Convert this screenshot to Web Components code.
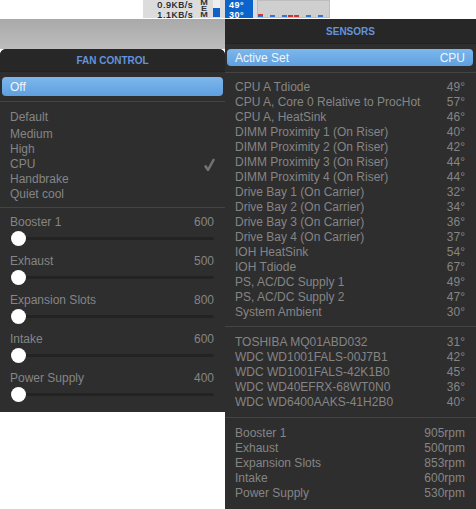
<!DOCTYPE html>
<html>
<head>
<meta charset="utf-8">
<title>Fan Control</title>
<style>
  html, body { margin: 0; padding: 0; background: #fff; }
  body { width: 476px; height: 509px; overflow: hidden; font-family: "Liberation Sans", Arial, sans-serif; font-size: 12px; }
</style>
</head>
<body>
<desktop-view>
  <menu-extras slot="bar"></menu-extras>
  <fan-panel slot="left"></fan-panel>
  <sensor-panel slot="right"></sensor-panel>
</desktop-view>

<script>
// shared bits for the two dark panels
const panelCss = `
  .title {
    display: flex;
    align-items: center;
    justify-content: center;
    font-size: 10px;
    font-weight: bold;
    color: #6493dc;
    background: #272727;
    border-bottom: 1px solid #222;
  }
  .sep { height: 1px; background: #444; }
`;

class DesktopView extends HTMLElement {
  constructor() {
    super();
    this.attachShadow({ mode: 'open' });
    this.shadowRoot.innerHTML = `
      <style>
        :host { display: block; width: 476px; height: 509px; }
        .bar { height: 19px; display: flex; }
        .cols { display: flex; height: 490px; }
        .left { width: 225px; }
        .gap {
          height: 30px;
          background: linear-gradient(#a9a9a9, #bdbdbd);
        }
      </style>
      <div class="bar"><slot name="bar"></slot></div>
      <div class="cols">
        <div class="left">
          <div class="gap"></div>
          <slot name="left"></slot>
        </div>
        <slot name="right"></slot>
      </div>
    `;
  }
}

class MenuExtras extends HTMLElement {
  constructor() {
    super();
    this.attachShadow({ mode: 'open' });
    // little history bars in the last item
    const ticks = [[13, '#37c'], [25, '#37c'], [31, '#c33'], [37, '#c33'], [49, '#37c'], [61, '#37c']]
      .map(([x, c]) => `<rect x="${x}" y="15" width="5" height="2" fill="${c}"/>`).join('');
    this.shadowRoot.innerHTML = `
      <style>
        :host {
          display: flex;
          margin-left: 143px;
          width: 187px;
          height: 18px;
          background: #dcdcdc;
          color: #111;
          font-size: 9px;
        }
        .net { width: 38px; margin-left: 12px; line-height: 10px; text-align: right; white-space: nowrap; letter-spacing: 0.6px; -webkit-text-stroke: 0.2px #111; }
        .mem {
          width: 8px; margin-left: 7px; font-size: 7px; line-height: 6px;
          text-align: center; color: #333; font-weight: bold; transform: scaleX(1.3);
        }
        .meter { width: 7px; height: 17px; margin-left: 5px; background: linear-gradient(#eee 50%, #0f62c6 50%); }
        .temp {
          width: 28px; margin-left: 5px; height: 18px; background: #0a64cc; color: #fff;
          font-size: 9px; font-weight: bold; line-height: 10px; padding-left: 4px; box-sizing: border-box; letter-spacing: 0.5px;
        }
        svg { margin-left: 4px; display: block; }
      </style>
      <div class="net">0.9KB/s<br>1.1KB/s</div>
      <div class="mem">M<br>E<br>M</div>
      <div class="meter"></div>
      <div class="temp">49°<br>30°</div>
      <svg width="73" height="18" viewBox="0 0 73 18">
        <rect x="0.5" y="0.5" width="72" height="17" fill="#cfcfcf" stroke="#bdbdbd"/>
        <rect x="1" y="15" width="5" height="2" fill="#37c"/>
        <rect x="1" y="14" width="5" height="2" fill="#c33"/>
        ${ticks}
      </svg>
    `;
  }
}

// blue highlighted row, used at the top of both panels
class BlueRow extends HTMLElement {
  constructor() {
    super();
    this.attachShadow({ mode: 'open' });
    this.shadowRoot.innerHTML = `
      <style>
        :host {
          display: flex;
          justify-content: space-between;
          align-items: center;
          border-radius: 4px;
          padding: 0 8px;
          color: #f0f5fb;
          background: linear-gradient(#7db8ec, #5f9fe0);
        }
      </style>
      <slot></slot>
    `;
  }
}

class ValueRow extends HTMLElement {
  constructor() {
    super();
    this.attachShadow({ mode: 'open' });
    this.shadowRoot.innerHTML = `
      <style>
        :host { display: flex; justify-content: space-between; height: 15px; line-height: 15px; }
      </style>
      <span>${this.getAttribute('name')}</span><span>${this.getAttribute('value')}</span>
    `;
  }
}

class FanSlider extends HTMLElement {
  constructor() {
    super();
    this.attachShadow({ mode: 'open' });
    this.shadowRoot.innerHTML = `
      <style>
        :host { display: block; height: 39px; }
        .top { display: flex; justify-content: space-between; height: 15px; line-height: 15px; }
        .track { position: relative; height: 3px; margin-top: 7px; border-radius: 2px; background: #232323; }
        .knob {
          position: absolute; left: 1px; top: -6px; width: 15px; height: 15px;
          border-radius: 50%; background: #fff;
        }
      </style>
      <div class="top"><span>${this.getAttribute('name')}</span><span>${this.getAttribute('value')}</span></div>
      <div class="track"><div class="knob"></div></div>
    `;
  }
}

class FanPanel extends HTMLElement {
  constructor() {
    super();
    this.attachShadow({ mode: 'open' });
    const modes = ['Medium', 'High', 'CPU', 'Handbrake', 'Quiet cool'].map(m => `
      <div class="mode">${m}${m === 'CPU' ? `<svg width="11" height="13" viewBox="0 0 11 13"><path d="M1 7.5 L4 12 L10 1" fill="none" stroke="#737373" stroke-width="2.4"/></svg>` : ''}</div>
    `).join('');
    const fans = [['Booster 1', 600], ['Exhaust', 500], ['Expansion Slots', 800], ['Intake', 600], ['Power Supply', 400]]
      .map(([n, v]) => `<fan-slider name="${n}" value="${v}"></fan-slider>`).join('');
    this.shadowRoot.innerHTML = `
      <style>
        :host {
          display: block;
          height: 363px;
          color: #858585;
          background: #2e2e2e;
          border-radius: 6px 6px 0 0;
          overflow: hidden;
        }
        ${panelCss}
        .title { height: 22px; }
        blue-row { height: 19px; margin: 5px 2px 5px; }
        .modes { padding: 7px 10px 5px; }
        .mode { height: 15px; line-height: 15px; display: flex; justify-content: space-between; align-items: center; }
        .mode.first { height: 17px; line-height: 17px; margin-bottom: 1px; }
        .fans { padding: 7px 11px 0 10px; }
      </style>
      <div class="title">FAN CONTROL</div>
      <blue-row>Off</blue-row>
      <div class="sep"></div>
      <div class="modes">
        <div class="mode first">Default</div>
        ${modes}
      </div>
      <div class="sep"></div>
      <div class="fans">${fans}</div>
    `;
  }
}

class SensorPanel extends HTMLElement {
  constructor() {
    super();
    this.attachShadow({ mode: 'open' });
    const rows = list => list.map(([n, v]) => `<value-row name="${n}" value="${v}"></value-row>`).join('');
    const temps = [
      ['CPU A Tdiode', '49°'], ['CPU A, Core 0 Relative to ProcHot', '57°'], ['CPU A, HeatSink', '46°'],
      ['DIMM Proximity 1 (On Riser)', '40°'], ['DIMM Proximity 2 (On Riser)', '42°'],
      ['DIMM Proximity 3 (On Riser)', '44°'], ['DIMM Proximity 4 (On Riser)', '44°'],
      ['Drive Bay 1 (On Carrier)', '32°'], ['Drive Bay 2 (On Carrier)', '34°'],
      ['Drive Bay 3 (On Carrier)', '36°'], ['Drive Bay 4 (On Carrier)', '37°'],
      ['IOH HeatSink', '54°'], ['IOH Tdiode', '67°'],
      ['PS, AC/DC Supply 1', '49°'], ['PS, AC/DC Supply 2', '47°'], ['System Ambient', '30°']
    ];
    const disks = [
      ['TOSHIBA MQ01ABD032', '31°'], ['WDC WD1001FALS-00J7B1', '42°'], ['WDC WD1001FALS-42K1B0', '45°'],
      ['WDC WD40EFRX-68WT0N0', '36°'], ['WDC WD6400AAKS-41H2B0', '40°']
    ];
    const speeds = [
      ['Booster 1', '905rpm'], ['Exhaust', '500rpm'], ['Expansion Slots', '853rpm'],
      ['Intake', '600rpm'], ['Power Supply', '530rpm']
    ];
    this.shadowRoot.innerHTML = `
      <style>
        :host {
          display: block;
          flex: 1;
          height: 490px;
          color: #858585;
          background: #2e2e2e;
        }
        ${panelCss}
        .title { height: 24px; }
        blue-row { height: 17px; margin: 5px 3px 6px 2px; }
        .group { padding: 8px 11px 7px 10px; }
        .group.temps { padding: 7px 11px 6px 10px; }
      </style>
      <div class="title">SENSORS</div>
      <blue-row><span>Active Set</span><span>CPU</span></blue-row>
      <div class="sep"></div>
      <div class="group temps">${rows(temps)}</div>
      <div class="sep"></div>
      <div class="group">${rows(disks)}</div>
      <div class="sep"></div>
      <div class="group">${rows(speeds)}</div>
    `;
  }
}

// children first so they are ready when panels build their markup
customElements.define('value-row', ValueRow);
customElements.define('fan-slider', FanSlider);
customElements.define('blue-row', BlueRow);
customElements.define('menu-extras', MenuExtras);
customElements.define('fan-panel', FanPanel);
customElements.define('sensor-panel', SensorPanel);
customElements.define('desktop-view', DesktopView);
</script>
</body>
</html>
